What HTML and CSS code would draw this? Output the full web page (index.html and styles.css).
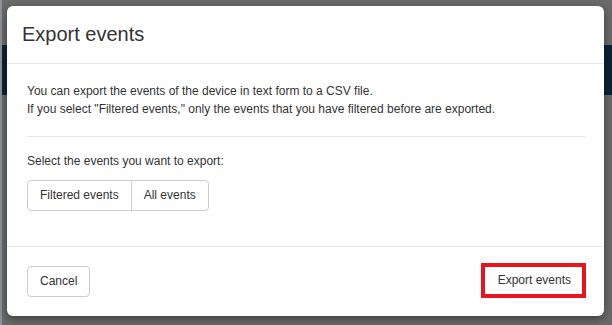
FILE: index.html
```html
<!DOCTYPE html>
<html lang="en">
<head>
<meta charset="utf-8">
<title>Export events</title>
<link rel="stylesheet" href="styles.css">
</head>
<body>
<div class="backdrop">
  <div class="page-strip page-strip-left"></div>
  <div class="page-band page-band-left"></div>
  <div class="page-band page-band-right"></div>
</div>
<div class="modal">
  <div class="modal-header">
    <h4 class="modal-title">Export events</h4>
  </div>
  <div class="modal-body">
    <p class="intro">You can export the events of the device in text form to a CSV file.<br>If you select "Filtered events," only the events that you have filtered before are exported.</p>
    <hr class="sep">
    <p class="label">Select the events you want to export:</p>
    <div class="btn-group">
      <button class="btn">Filtered events</button><button class="btn">All events</button>
    </div>
  </div>
  <div class="modal-footer">
    <button class="btn btn-single">Cancel</button>
    <button class="btn btn-export">Export events</button>
  </div>
</div>
</body>
</html>
```
FILE: styles.css
```css
* { box-sizing: border-box; }
html, body {
  margin: 0;
  padding: 0;
  width: 612px;
  height: 325px;
  overflow: hidden;
}
body {
  background: #6b6b6b;
  font-family: "Liberation Sans", Arial, sans-serif;
  font-size: 12px;
  line-height: 1.42857;
  color: #333;
  position: relative;
  padding: 6px 8px 0 7px;
}
.backdrop {
  position: absolute;
  inset: 0;
}
.page-strip-left {
  position: absolute;
  left: 0; top: 0;
  width: 2px; height: 325px;
  background: #8d9298;
}
.page-band {
  position: absolute;
  top: 45px;
  height: 50px;
  background: #0c2236;
}
.page-band-left { left: 2px; width: 6px; }
.page-band-right { right: 0; width: 9px; }

.modal {
  position: relative;
  width: 597px;
  height: 310px;
  background: #fff;
  border-radius: 6px;
  box-shadow: 0 3px 10px rgba(0, 0, 0, 0.45);
  display: flex;
  flex-direction: column;
}
.modal-header {
  padding: 15px;
  border-bottom: 1px solid #e5e5e5;
}
.modal-title {
  margin: 0;
  font-size: 20px;
  font-weight: normal;
  line-height: 27px;
}
.modal-body {
  flex: 1;
  padding: 19px 19px 0 20px;
}
.intro {
  margin: 0;
  line-height: 17.5px;
}
.sep {
  border: 0;
  border-top: 1px solid #e5e5e5;
  margin: 18px 0 16px;
}
.label {
  margin: 0 0 10px;
  line-height: 17px;
}
.btn-group {
  display: inline-flex;
}
.btn {
  font-family: inherit;
  font-size: 12px;
  line-height: 17px;
  color: #333;
  background: #fff;
  border: 1px solid #ccc;
  padding: 6px 12px;
  margin: 0;
  cursor: pointer;
}
.btn-group .btn:first-child {
  border-radius: 4px 0 0 4px;
}
.btn-group .btn:last-child {
  border-radius: 0 4px 4px 0;
  margin-left: -1px;
}
.btn-single {
  border-radius: 4px;
  margin-top: 2px;
}
.btn-export {
  border: 4px solid #e8141e;
  padding: 5px 11px 5px 13px;
  border-radius: 0;
}
.modal-footer {
  border-top: 1px solid #e5e5e5;
  padding: 16px 18px 18px 20px;
  display: flex;
  justify-content: space-between;
  align-items: center;
}
```
